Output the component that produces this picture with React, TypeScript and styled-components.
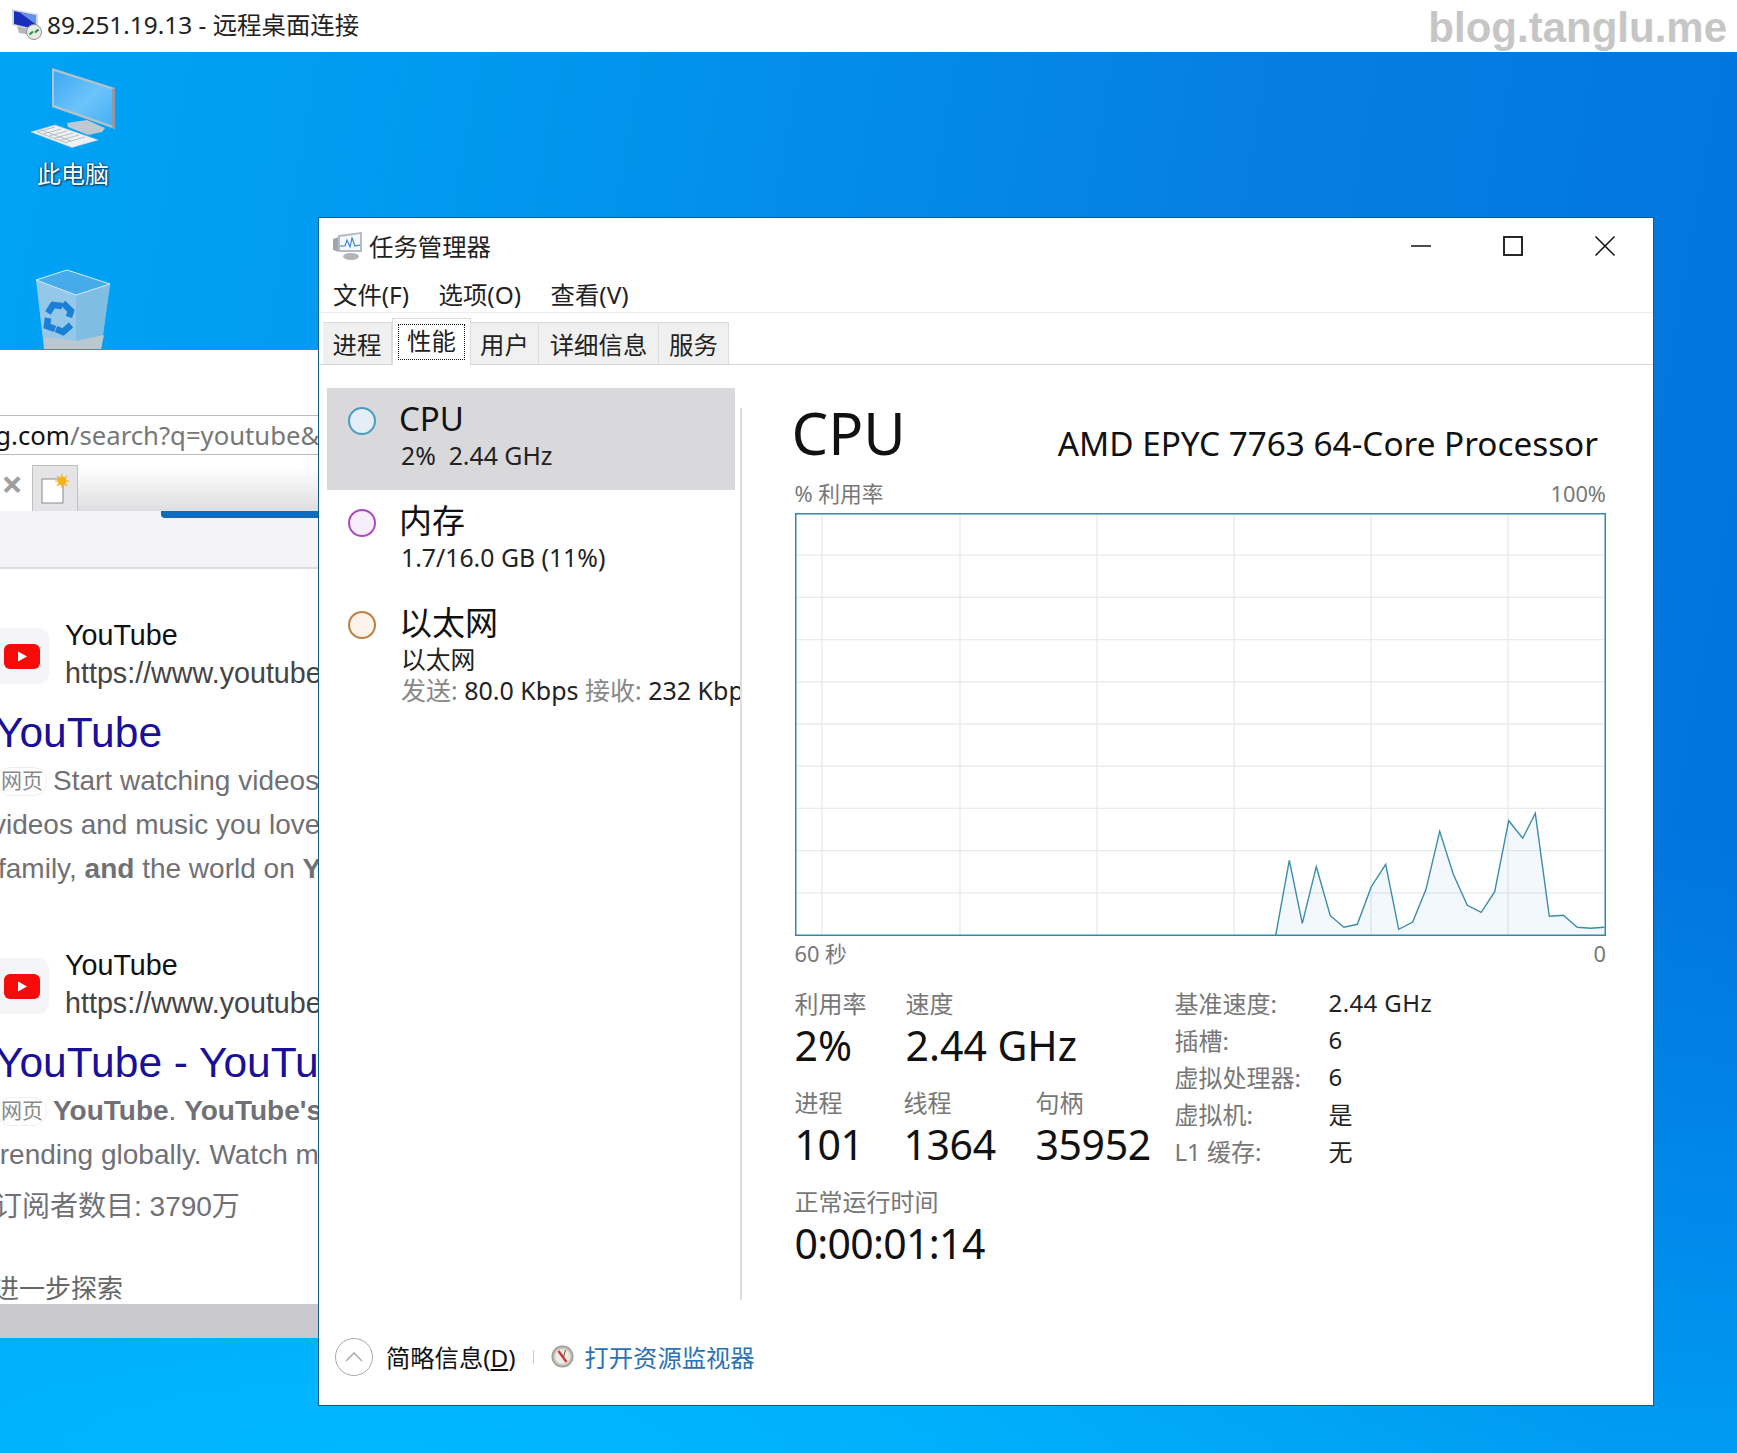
import React from "react";
import styled, { createGlobalStyle } from "styled-components";

const ui = `"Noto Sans", "Noto Sans CJK SC", sans-serif`;
const web = `"Liberation Sans", "Noto Sans CJK SC", sans-serif`;

const Global = createGlobalStyle`
  html, body { margin: 0; padding: 0; background: #fff; }
  * { box-sizing: border-box; }
`;

const Page = styled.div`
  width: 1737px;
  height: 1453px;
  overflow: hidden;
  display: flex;
  flex-direction: column;
  font-family: ${ui};
  color: #111;
`;

const RemoteBar = styled.div`
  height: 52px;
  flex: none;
  display: flex;
  align-items: center;
  padding: 0 10px 5px 11px;
  gap: 5px;
  background: #fff;
`;
const RemoteTitle = styled.div`
  font-size: 24.4px;
  color: #222;
  flex: 1;
  white-space: pre;
`;
const Watermark = styled.div`
  margin-top: 8px;
  font-family: "Liberation Sans", sans-serif;
  font-weight: 700;
  font-size: 42px;
  color: #c6c6c6;
`;

const Desktop = styled.div`
  position: relative;
  flex: 1;
  overflow: hidden;
  padding: 16px 0 0 31px;
  background:
    radial-gradient(ellipse 1250px 330px at 22% 100%, #00b8ff 0, rgba(0, 184, 255, 0.7) 45%, rgba(0, 184, 255, 0) 100%),
    linear-gradient(to top, rgba(0, 160, 245, 0.9) 0, rgba(0, 150, 240, 0.7) 200px, rgba(0, 140, 235, 0) 620px),
    linear-gradient(100deg, #00a3f6 0, #009cf2 18%, #0580e2 62%, #0072dc 100%);
`;
const DesktopIcon = styled.div`
  width: 84px;
  margin-bottom: 78px;
  display: flex;
  flex-direction: column;
  align-items: center;
`;
const IconLabel = styled.div`
  margin-top: 9px;
  font-size: 24px;
  line-height: 34px;
  white-space: nowrap;
  color: #fff;
  text-shadow: 1px 1px 2px #003050, 0 0 2px #003050;
`;

const Browser = styled.div`
  position: absolute;
  left: -60px;
  top: 298px;
  width: 700px;
  height: 988px;
  background: #fff;
  overflow: hidden;
  display: flex;
  flex-direction: column;
`;
const UrlBox = styled.div`
  margin-top: 65px;
  height: 40px;
  flex: none;
  display: flex;
  align-items: center;
  padding-left: 17px;
  border-top: 1.5px solid #bcbcbc;
  border-bottom: 1.5px solid #bcbcbc;
  font-size: 25.7px;
  color: #777;
  white-space: nowrap;
`;
const UrlHost = styled.span`
  color: #111;
`;
const BrowserTabs = styled.div`
  height: 56px;
  flex: none;
  display: flex;
  align-items: flex-end;
  background: linear-gradient(to bottom, #fff 20%, #dedee0 100%);
`;
const OpenTab = styled.div`
  width: 92px;
  height: 56px;
  background: #fff;
  display: flex;
  align-items: center;
  justify-content: flex-end;
  padding-right: 9px;
  font-size: 38px;
  color: #a0a0a0;
  font-weight: 700;
`;
const NewTab = styled.div`
  width: 46px;
  height: 46px;
  background: #e4e4e6;
  border: 1px solid #c0c0c0;
  border-bottom: none;
  display: flex;
  align-items: center;
  justify-content: center;
`;
const ToolStrip = styled.div`
  height: 58px;
  flex: none;
  background: #f4f4f6;
  border-bottom: 2px solid #dddddf;
`;
const Progress = styled.div`
  margin-left: 221px;
  height: 7px;
  background: #0f6cbd;
  border-bottom-left-radius: 4px;
`;
const Results = styled.div`
  flex: 1;
  padding: 48px 0 0 57px;
  font-family: ${web};
  white-space: nowrap;
`;
const Result = styled.div<{ $gap?: number }>`
  margin-bottom: ${(p) => p.$gap ?? 0}px;
`;
const ResultHead = styled.div`
  display: flex;
  align-items: center;
  gap: 16px;
  margin-left: -9px;
`;
const SiteBadge = styled.div`
  width: 61px;
  height: 56px;
  margin-top: 3px;
  border-radius: 11px;
  background: #f5f5f7;
  display: flex;
  align-items: center;
  justify-content: flex-end;
  padding-right: 9px;
`;
const SiteName = styled.div`
  font-size: 28.7px;
  line-height: 37.5px;
  color: #111;
`;
const SiteUrl = styled(SiteName)`
  color: #444;
`;
const ResultTitle = styled.div`
  margin: 15px 0 0 -2px;
  font-size: 42.5px;
  line-height: 52px;
  color: #1a0f98;
`;
const Snippet = styled.div<{ $shift?: number; $top?: number }>`
  margin-left: ${(p) => p.$shift ?? 0}px;
  margin-top: ${(p) => p.$top ?? 0}px;
  display: flex;
  align-items: center;
  height: 44px;
  font-size: 28px;
  color: #707076;
  white-space: pre;
`;
const WebTag = styled.span`
  width: 50px;
  height: 29px;
  margin-right: 6px;
  flex: none;
  border: 1.5px solid #eee;
  border-radius: 14px;
  font-size: 21px;
  line-height: 26px;
  text-align: center;
  color: #888;
`;
const ExploreMore = styled.div`
  margin: 41px 0 0 -4px;
  font-size: 26px;
  line-height: 44px;
  color: #666;
`;
const ScrollStrip = styled.div`
  position: absolute;
  left: 0;
  right: 0;
  bottom: 0;
  height: 34px;
  background: #c9c8cc;
`;

const Window = styled.div`
  position: absolute;
  left: 318px;
  top: 165px;
  width: 1336px;
  height: 1189px;
  background: #fff;
  border: 1px solid #0b5f85;
  display: flex;
  flex-direction: column;
`;
const TitleRow = styled.div`
  height: 55px;
  flex: none;
  display: flex;
  align-items: center;
  padding: 0 2px 0 13px;
  font-size: 24.4px;
  color: #222;
`;
const WindowName = styled.div`
  margin-left: 6px;
  flex: 1;
`;
const WinButton = styled.div`
  width: 92px;
  display: flex;
  justify-content: center;
`;
const MenuRow = styled.div`
  height: 40px;
  flex: none;
  display: flex;
  align-items: center;
  gap: 29.5px;
  padding: 1px 0 0 14px;
  font-size: 24.4px;
  color: #222;
  border-bottom: 1.5px solid #eee;
`;
const TabRow = styled.div`
  height: 52px;
  flex: none;
  display: flex;
  align-items: flex-end;
  padding-left: 4px;
  border-bottom: 1.5px solid #d9d9d9;
`;
const Tab = styled.div<{ $width: number }>`
  width: ${(p) => p.$width}px;
  height: 42px;
  background: #f0f0f0;
  border: 1px solid #dcdcdc;
  border-left: none;
  border-bottom: none;
  display: flex;
  align-items: center;
  justify-content: center;
  font-size: 24.4px;
  color: #222;
`;
const ActiveTab = styled.div`
  width: 79px;
  height: 47px;
  margin-bottom: -1px;
  background: #fff;
  border: 1px solid #dcdcdc;
  border-bottom: none;
  padding: 5px;
  font-size: 24.4px;
  color: #222;
  z-index: 1;
`;
const FocusBox = styled.div`
  height: 36px;
  padding-bottom: 5px;
  border: 1px dotted #111;
  display: flex;
  align-items: center;
  justify-content: center;
`;
const Body = styled.div`
  height: 955px;
  flex: none;
  display: flex;
`;
const Sidebar = styled.div`
  width: 413px;
  margin-left: 8px;
  padding-top: 23px;
  flex: none;
  overflow: hidden;
`;
const Item = styled.div<{ $selected?: boolean }>`
  width: 408px;
  height: 102px;
  display: flex;
  gap: 23px;
  padding-left: 21px;
  white-space: nowrap;
  background: ${(p) => (p.$selected ? "#d9d9db" : "transparent")};
`;
const Dot = styled.div<{ $line: string; $fill: string }>`
  width: 28px;
  height: 28px;
  margin-top: 19px;
  flex: none;
  border-radius: 50%;
  border: 2px solid ${(p) => p.$line};
  background: ${(p) => p.$fill};
`;
const ItemText = styled.div`
  padding-top: 13px;
`;
const ItemTitle = styled.div`
  font-size: 33px;
  line-height: 36px;
  color: #111;
`;
const ItemSub = styled.div`
  margin-left: 2px;
  font-size: 24.8px;
  line-height: 36px;
  color: #222;
`;
const ItemRate = styled.div`
  margin: -2px 0 0 2px;
  font-size: 25px;
  line-height: 30px;
  color: #222;
`;
const Muted = styled.span`
  color: #888;
`;
const Divider = styled.div`
  width: 1.5px;
  height: 892px;
  margin-top: 43px;
  flex: none;
  background: #dedede;
`;
const Panel = styled.div`
  flex: 1;
  padding: 36px 47px 0 53px;
  min-width: 0;
`;
const PanelHead = styled.div`
  display: flex;
  justify-content: space-between;
  align-items: flex-end;
  margin-left: -3px;
  margin-right: 8px;
`;
const BigName = styled.div`
  font-size: 58px;
  line-height: 64px;
  color: #111;
`;
const CpuModel = styled.div`
  margin-bottom: -2px;
  font-size: 33.3px;
  line-height: 48px;
  color: #111;
`;
const AxisRow = styled.div<{ $top: number }>`
  display: flex;
  justify-content: space-between;
  margin-top: ${(p) => p.$top}px;
  font-size: 21.8px;
  line-height: 28px;
  color: #777;
`;
const Chart = styled.svg`
  display: block;
  margin-top: 5px;
`;
const StatsArea = styled.div`
  display: flex;
  margin-top: 22px;
`;
const StatsLeft = styled.div`
  width: 380px;
  flex: none;
`;
const StatRow = styled.div`
  display: flex;
  margin-bottom: 15px;
`;
const Stat = styled.div<{ $width?: number }>`
  width: ${(p) => (p.$width ? `${p.$width}px` : "auto")};
`;
const StatLabel = styled.div`
  font-size: 24px;
  line-height: 28px;
  color: #777;
`;
const StatValue = styled.div<{ $tight?: number }>`
  margin: -1px 0 1px;
  font-size: 41px;
  line-height: 56px;
  letter-spacing: ${(p) => p.$tight ?? 0}px;
  color: #111;
  white-space: nowrap;
`;
const Facts = styled.div`
  display: grid;
  grid-template-columns: 154px auto;
  grid-auto-rows: 37px;
  align-items: center;
  margin-top: -6px;
  font-size: 24px;
`;
const FactKey = styled.div`
  color: #777;
`;
const FactValue = styled.div`
  letter-spacing: 0.4px;
  color: #222;
`;
const Footer = styled.div`
  flex: 1;
  display: flex;
  align-items: center;
  padding: 0 0 12px 16px;
  font-size: 24.3px;
  color: #111;
`;
const CollapseButton = styled.div`
  width: 38px;
  height: 38px;
  border: 1px solid #aaa;
  border-radius: 50%;
  display: flex;
  align-items: center;
  justify-content: center;
  margin-right: 13px;
`;
const FooterSep = styled.div`
  width: 1px;
  height: 14px;
  margin: 0 17px;
  background: #ccc;
`;
const Link = styled.div`
  margin-left: 11px;
  color: #2a72b5;
`;
const Underlined = styled.span`
  text-decoration: underline;
`;

function RdpIcon() {
  return (
    <svg width="31" height="32" viewBox="0 0 31 32">
      <path d="M1 1l26 5v17L1 17z" fill="#cfd8e2" />
      <path d="M3 3l22 4.500v14L3 16z" fill="#1a2fb8" />
      <path d="M8 4l17 3.500v9z" fill="#5f93ea" />
      <path d="M6 18l16 4v5l-14-2z" fill="#b4b8bc" />
      <circle cx="23" cy="24" r="7.500" fill="#e8eae8" stroke="#8d9290" />
      <path d="M18.500 26.500l3.500-3M27.500 21.500l-3.500 3" stroke="#1d8f3c" strokeWidth="2" />
    </svg>
  );
}

function ComputerIcon() {
  return (
    <svg width="84" height="80" viewBox="0 0 84 80">
      <defs>
        <linearGradient id="screenFill" x1="0" y1="0" x2="1" y2="1">
          <stop offset="0" stopColor="#3fa9f3" />
          <stop offset="0.55" stopColor="#6cc4fb" />
          <stop offset="1" stopColor="#46b0f6" />
        </linearGradient>
      </defs>
      <path d="M21 0l63 20v41L21 39z" fill="#b5c1ca" />
      <path d="M23 3l58 18.500v36L23 37z" fill="url(#screenFill)" />
      <path d="M81 21v38l3 2V20z" fill="#8d9aa3" />
      <path d="M36 55l20-3 18 8-3 4-14 3-20-8z" fill="#bfc9cf" />
      <path d="M0 64l24-7 43 15-26 7.500z" fill="#eef1f3" stroke="#c6ced3" strokeWidth="0.600" />
      <path
        d="M6 64l18-5M12 66l18-5M18 68l18-5M24 70l18-5M30 72l18-5M36 74l18-5M10 62l30 11M6 64l30 11"
        stroke="#a9b2b8"
        strokeWidth="0.800"
      />
    </svg>
  );
}

function BinIcon() {
  return (
    <svg width="76" height="80" viewBox="0 0 76 80">
      <path d="M1 11L9 80h57l9-65-34 11z" fill="#93c8e8" />
      <path d="M41 26l34-11-9 65H41z" fill="#7fbde3" />
      <path d="M1 11L32 1l43 14-34 11z" fill="#45abea" stroke="#d5ecfb" strokeWidth="1" />
      <path d="M9 68l32 4 28-6-3 14H9z" fill="#bcc8cf" />
      <g fill="none" stroke="#1a7fd6" strokeWidth="6.500">
        <path d="M13 44l5-8 9 1" />
        <path d="M28 34l8 8-2 6" />
        <path d="M36 56l-8 7-7-3" />
        <path d="M20 60l-8-3 1-8" />
      </g>
    </svg>
  );
}

function NewTabIcon() {
  return (
    <svg width="28" height="30" viewBox="0 0 28 30">
      <rect x="1" y="5" width="21" height="24" fill="#fff" stroke="#8a8a8a" />
      <circle cx="21" cy="7" r="4.500" fill="#f4b21c" />
      <path d="M21 0v14M14 7h14M16 2l10 10M26 2L16 12" stroke="#f4b21c" strokeWidth="1.200" />
    </svg>
  );
}

function YoutubeIcon() {
  return (
    <svg width="36" height="25" viewBox="0 0 36 25">
      <rect width="36" height="25" rx="6" fill="#f60a0a" />
      <path d="M14 7.500l9 5-9 5z" fill="#fff" />
    </svg>
  );
}

function MonitorAppIcon() {
  return (
    <svg width="31" height="30" viewBox="0 0 31 30">
      <path d="M1 8l6-2v15l-6-2z" fill="#a0a6aa" />
      <path d="M6 4l24-3v20L6 21z" fill="#b4bcc2" />
      <path d="M8 6l20-3v16L8 19z" fill="#f5f9ff" />
      <path d="M8 15l5 0 2-6 3 7 2-9 3 8 5-1" fill="none" stroke="#2f7fd0" strokeWidth="1.100" />
      <ellipse cx="19" cy="25.500" rx="8" ry="3.500" fill="#b0b5b9" />
    </svg>
  );
}

function CompassIcon() {
  return (
    <svg width="23" height="23" viewBox="0 0 23 23">
      <defs>
        <radialGradient id="compassFace">
          <stop offset="0.6" stopColor="#f0ebe4" />
          <stop offset="1" stopColor="#8f8f8c" />
        </radialGradient>
      </defs>
      <circle cx="11.500" cy="11.500" r="11" fill="url(#compassFace)" />
      <path d="M7.500 6l8 11" stroke="#c23a3a" strokeWidth="2.400" />
      <path d="M14.500 5l-2 7" stroke="#555" strokeWidth="1" />
    </svg>
  );
}

const graphPoints = [
  [480.7, 421.3], [494.3, 346.3], [507.3, 409.3], [521.3, 352.7], [535.3, 401.7],
  [549, 413.3], [562.3, 410.3], [576.3, 372.7], [590.7, 350.3], [603.7, 415.3],
  [617.7, 408], [631, 375.3], [644.7, 317.3], [658.3, 360.3], [672.3, 391.3],
  [686.3, 398.3], [699.7, 377.7], [713.7, 306.7], [727.7, 324.3], [740.3, 299.3],
  [754.3, 402.3], [768.3, 401.3], [782.3, 413.3], [795.7, 414.3], [809.3, 413.3],
];

function CpuChart() {
  const line = graphPoints.map((p) => p.join(",")).join(" ");
  const columns = [27, 165, 302, 439, 576, 713];
  const rows = [1, 2, 3, 4, 5, 6, 7, 8, 9];
  return (
    <Chart width="811" height="423" viewBox="0 0 811 423">
      {columns.map((x) => (
        <line key={x} x1={x} x2={x} y1="0" y2="423" stroke="#e6ebee" strokeWidth="1.300" />
      ))}
      {rows.map((r) => (
        <line key={r} x1="0" x2="811" y1={r * 42.2} y2={r * 42.2} stroke="#e6ebee" strokeWidth="1.300" />
      ))}
      <g transform="translate(0 1)">
        <polygon points={`480.7,421 ${line} 809.3,421`} fill="#2b8ac4" fillOpacity="0.06" />
        <polyline points={line} fill="none" stroke="#3b8cab" strokeWidth="1.400" />
      </g>
      <rect x="0.750" y="0.750" width="809.500" height="421.500" fill="none" stroke="#2f8aa6" strokeWidth="1.500" />
    </Chart>
  );
}

export default function App() {
  return (
    <Page>
      <Global />
      <RemoteBar>
        <RdpIcon />
        <RemoteTitle>89.251.19.13 - 远程桌面连接</RemoteTitle>
        <Watermark>blog.tanglu.me</Watermark>
      </RemoteBar>
      <Desktop>
        <DesktopIcon>
          <ComputerIcon />
          <IconLabel>此电脑</IconLabel>
        </DesktopIcon>
        <DesktopIcon>
          <BinIcon />
        </DesktopIcon>

        <Browser>
          <UrlBox>
            <UrlHost>bing.com</UrlHost>/search?q=youtube&amp;FORM=QBLH
          </UrlBox>
          <BrowserTabs>
            <OpenTab>×</OpenTab>
            <NewTab>
              <NewTabIcon />
            </NewTab>
          </BrowserTabs>
          <ToolStrip>
            <Progress />
          </ToolStrip>
          <Results>
            <Result $gap={56}>
              <ResultHead>
                <SiteBadge>
                  <YoutubeIcon />
                </SiteBadge>
                <div>
                  <SiteName>YouTube</SiteName>
                  <SiteUrl>https://www.youtube.com</SiteUrl>
                </div>
              </ResultHead>
              <ResultTitle>YouTube</ResultTitle>
              <Snippet>
                <WebTag>网页</WebTag>Start watching videos from
              </Snippet>
              <Snippet $shift={-5}>videos and music you love, upload</Snippet>
              <Snippet $shift={1}>
                family, <b>and</b> the world on <b>YouTube</b>
              </Snippet>
            </Result>
            <Result>
              <ResultHead>
                <SiteBadge>
                  <YoutubeIcon />
                </SiteBadge>
                <div>
                  <SiteName>YouTube</SiteName>
                  <SiteUrl>https://www.youtube.com</SiteUrl>
                </div>
              </ResultHead>
              <ResultTitle>YouTube - YouTube</ResultTitle>
              <Snippet>
                <WebTag>网页</WebTag>
                <b>YouTube</b>. <b>YouTube's</b> channel
              </Snippet>
              <Snippet $shift={-5}>trending globally. Watch more</Snippet>
              <Snippet $shift={-3} $top={5}>订阅者数目: 3790万</Snippet>
              <ExploreMore>进一步探索</ExploreMore>
            </Result>
          </Results>
          <ScrollStrip />
        </Browser>

        <Window>
          <TitleRow>
            <MonitorAppIcon />
            <WindowName>任务管理器</WindowName>
            <WinButton>
              <svg width="22" height="22" viewBox="0 0 22 22">
                <path d="M1 11h20" stroke="#111" strokeWidth="1.500" />
              </svg>
            </WinButton>
            <WinButton>
              <svg width="22" height="22" viewBox="0 0 22 22">
                <rect x="2" y="2" width="18" height="18" fill="none" stroke="#111" strokeWidth="1.800" />
              </svg>
            </WinButton>
            <WinButton>
              <svg width="22" height="22" viewBox="0 0 22 22">
                <path d="M1.500 1.500l19 19M20.500 1.500l-19 19" stroke="#111" strokeWidth="1.500" />
              </svg>
            </WinButton>
          </TitleRow>
          <MenuRow>
            <span>文件(F)</span>
            <span>选项(O)</span>
            <span>查看(V)</span>
          </MenuRow>
          <TabRow>
            <Tab $width={69}>进程</Tab>
            <ActiveTab>
              <FocusBox>性能</FocusBox>
            </ActiveTab>
            <Tab $width={68}>用户</Tab>
            <Tab $width={120}>详细信息</Tab>
            <Tab $width={70}>服务</Tab>
          </TabRow>
          <Body>
            <Sidebar>
              <Item $selected>
                <Dot $line="#4a9cc4" $fill="#e3eef6" />
                <ItemText>
                  <ItemTitle>CPU</ItemTitle>
                  <ItemSub>2%&nbsp; 2.44 GHz</ItemSub>
                </ItemText>
              </Item>
              <Item>
                <Dot $line="#a94cc0" $fill="#f8eefb" />
                <ItemText>
                  <ItemTitle>内存</ItemTitle>
                  <ItemSub>1.7/16.0 GB (11%)</ItemSub>
                </ItemText>
              </Item>
              <Item>
                <Dot $line="#c07f3c" $fill="#fcf3ea" />
                <ItemText>
                  <ItemTitle>以太网</ItemTitle>
                  <ItemSub>以太网</ItemSub>
                  <ItemRate>
                    <Muted>发送:</Muted> 80.0 Kbps <Muted>接收:</Muted> 232 Kbps
                  </ItemRate>
                </ItemText>
              </Item>
            </Sidebar>
            <Divider />
            <Panel>
              <PanelHead>
                <BigName>CPU</BigName>
                <CpuModel>AMD EPYC 7763 64-Core Processor</CpuModel>
              </PanelHead>
              <AxisRow $top={15}>
                <span>% 利用率</span>
                <span>100%</span>
              </AxisRow>
              <CpuChart />
              <AxisRow $top={4}>
                <span>60 秒</span>
                <span>0</span>
              </AxisRow>
              <StatsArea>
                <StatsLeft>
                  <StatRow>
                    <Stat $width={111}>
                      <StatLabel>利用率</StatLabel>
                      <StatValue>2%</StatValue>
                    </Stat>
                    <Stat>
                      <StatLabel>速度</StatLabel>
                      <StatValue>2.44 GHz</StatValue>
                    </Stat>
                  </StatRow>
                  <StatRow>
                    <Stat $width={109}>
                      <StatLabel>进程</StatLabel>
                      <StatValue $tight={-0.4}>101</StatValue>
                    </Stat>
                    <Stat $width={132}>
                      <StatLabel>线程</StatLabel>
                      <StatValue $tight={-0.4}>1364</StatValue>
                    </Stat>
                    <Stat>
                      <StatLabel>句柄</StatLabel>
                      <StatValue $tight={-0.4}>35952</StatValue>
                    </Stat>
                  </StatRow>
                  <Stat>
                    <StatLabel>正常运行时间</StatLabel>
                    <StatValue $tight={-0.7}>0:00:01:14</StatValue>
                  </Stat>
                </StatsLeft>
                <Facts>
                  <FactKey>基准速度:</FactKey>
                  <FactValue>2.44 GHz</FactValue>
                  <FactKey>插槽:</FactKey>
                  <FactValue>6</FactValue>
                  <FactKey>虚拟处理器:</FactKey>
                  <FactValue>6</FactValue>
                  <FactKey>虚拟机:</FactKey>
                  <FactValue>是</FactValue>
                  <FactKey>L1 缓存:</FactKey>
                  <FactValue>无</FactValue>
                </Facts>
              </StatsArea>
            </Panel>
          </Body>
          <Footer>
            <CollapseButton>
              <svg width="18" height="10" viewBox="0 0 18 10">
                <path d="M1 9l8-8 8 8" fill="none" stroke="#aaa" strokeWidth="1.500" />
              </svg>
            </CollapseButton>
            <span>
              简略信息(<Underlined>D</Underlined>)
            </span>
            <FooterSep />
            <CompassIcon />
            <Link>打开资源监视器</Link>
          </Footer>
        </Window>
      </Desktop>
    </Page>
  );
}
